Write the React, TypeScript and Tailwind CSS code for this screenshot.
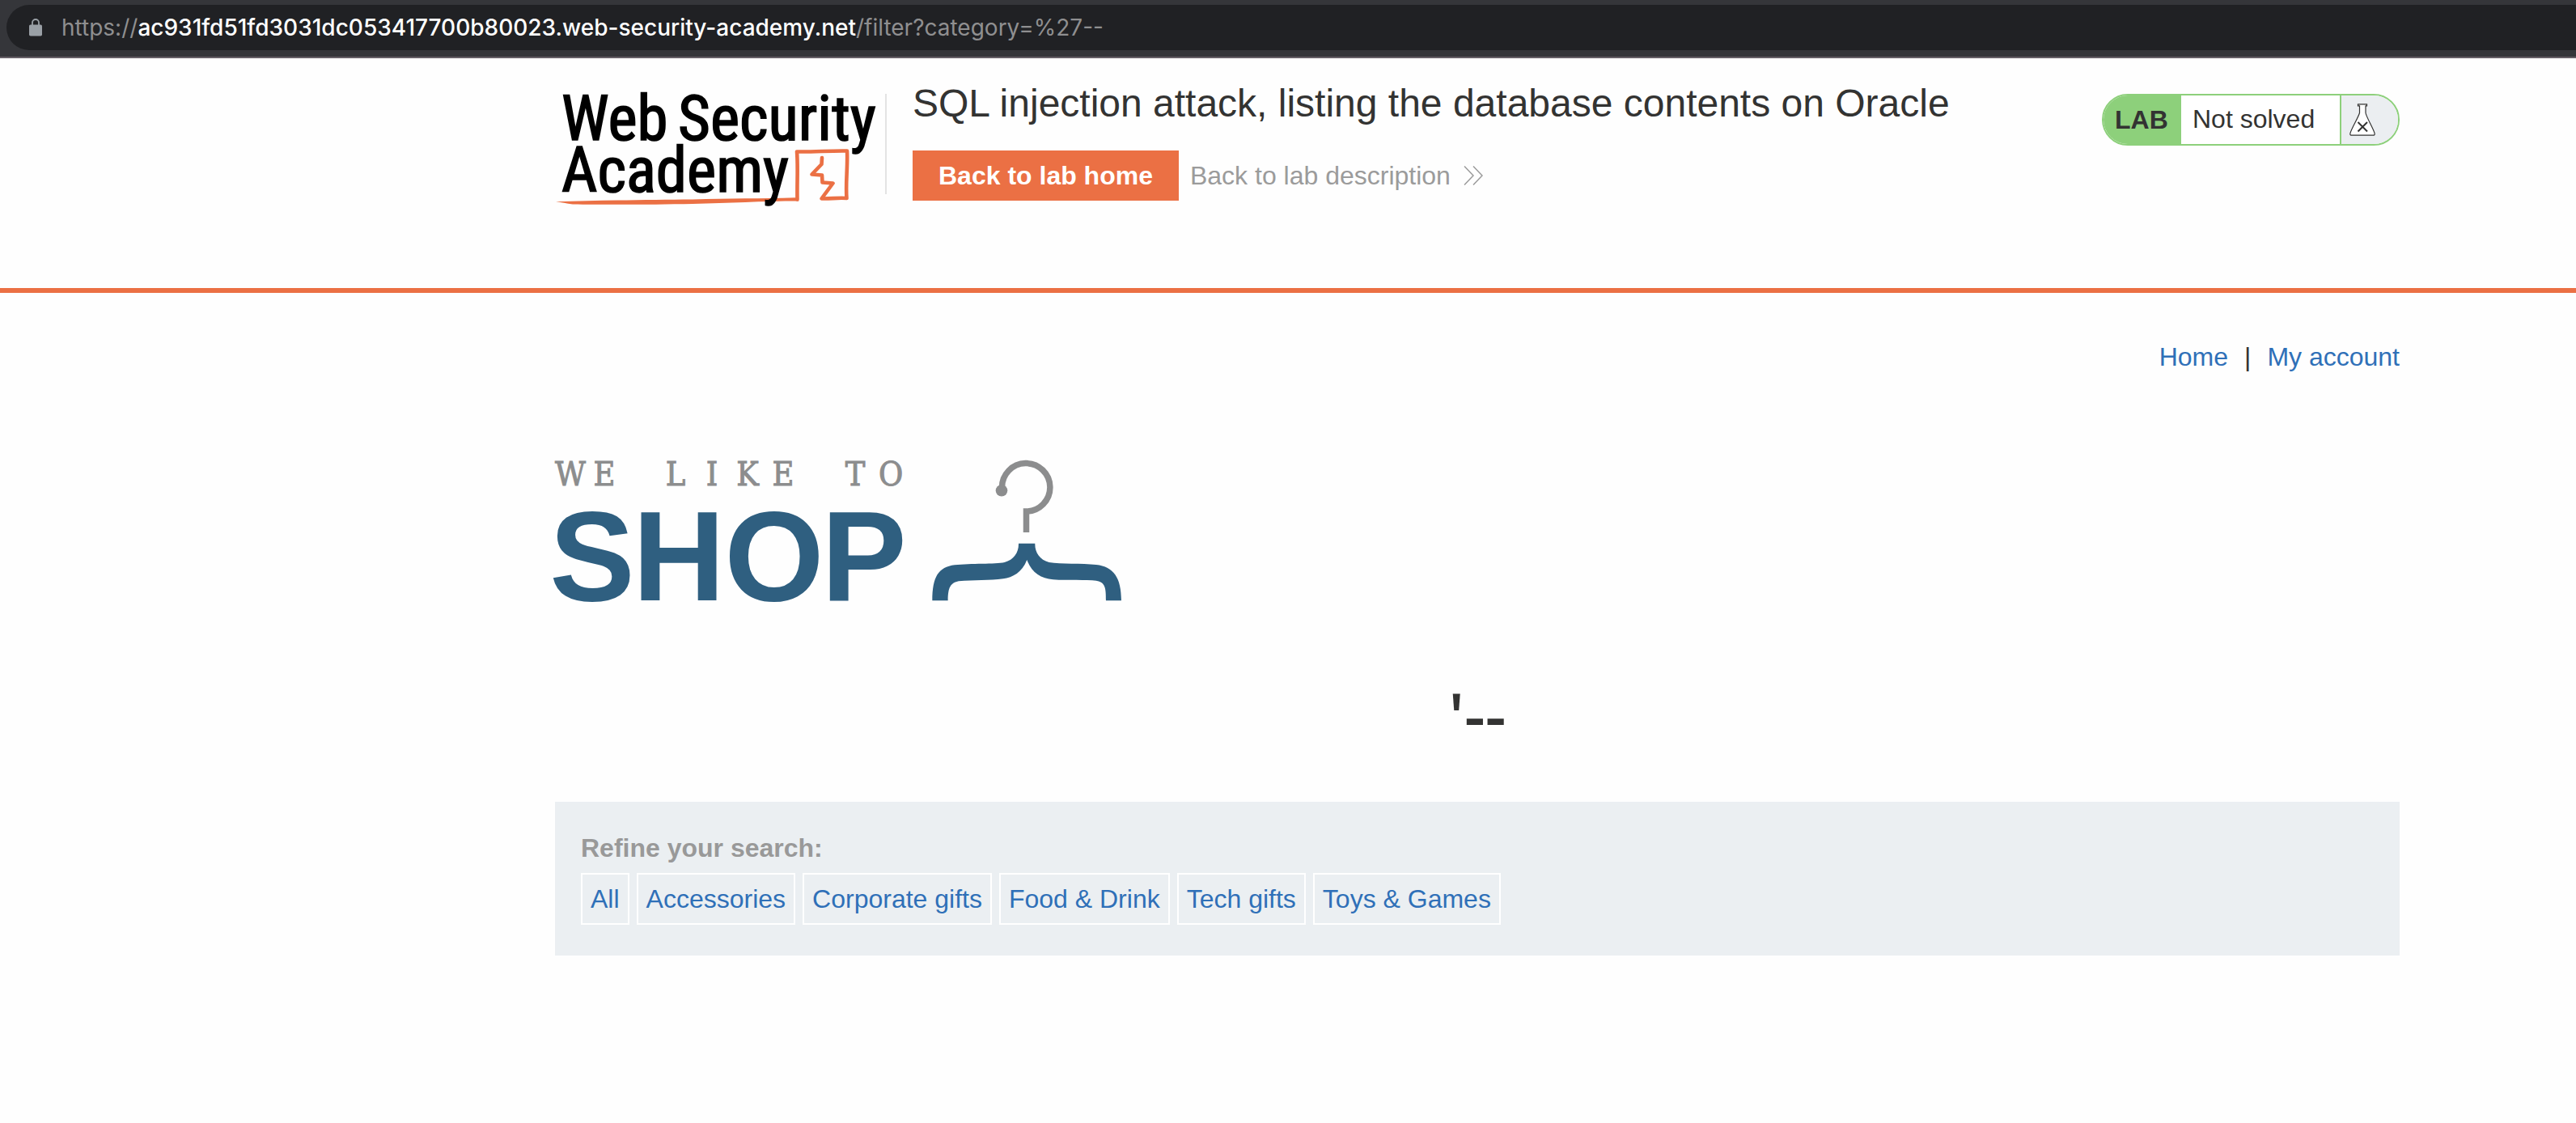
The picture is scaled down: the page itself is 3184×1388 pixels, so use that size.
const categories = ['All', 'Accessories', 'Corporate gifts', 'Food & Drink', 'Tech gifts', 'Toys & Games'];

const taglineLetters: [string, number][] = [
  ['W', 19], ['E', 61], ['L', 149], ['I', 194], ['K', 238], ['E', 282], ['T', 371], ['O', 415],
];

const shopLetters: [string, number][] = [['S', 46], ['H', 153], ['O', 271], ['P', 382]];

function AddressBar() {
  return (
    <div className="h-[72px] border-b-2 border-[#655f66] bg-[#35363a] pt-1.5 pl-2">
      <div className="flex h-14 items-center rounded-l-full bg-[#202124] pl-7">
        <svg className="h-[22px] w-4 shrink-0" viewBox="0 0 16 22" aria-hidden="true">
          <path d="M4 8V5a4 4 0 0 1 8 0V8" fill="none" stroke="#9aa0a6" strokeWidth="1.8" />
          <rect x="0" y="7.5" width="16" height="14" rx="1.8" fill="#9aa0a6" />
        </svg>
        <p className="ml-6 font-['Inter',sans-serif] text-[28px] leading-10 whitespace-nowrap text-[#8f8f90]">
          https://<span className="font-medium text-white">ac931fd51fd3031dc053417700b80023.web-security-academy.net</span>/filter?category=%27--
        </p>
      </div>
    </div>
  );
}

function AcademyLogo() {
  return (
    <svg className="h-[140px] w-[408px] shrink-0 overflow-visible" viewBox="0 0 408 140" role="img" aria-label="Web Security Academy">
      <path
        d="M1 133.2C60 131.500 120 131 170 130.500C215 129 255 129.500 297.500 128.200L301.500 132.500C255 132.500 215 135 170 136C120 137 60 137 22 136.500C14 135.500 8 134 1 133.200Z"
        fill="#eb7044"
      />
      <path
        d="M299.500 130.500C299 110 300.500 90 299 71.500C320 72 340 70 361 70.500C362 90 359 110 360.500 129C350 128 340 130 329.500 129.500L343.500 110.500L330.500 109.500L330 100.500L317.500 99.500L329.500 87L330 79"
        fill="none"
        stroke="#eb7044"
        strokeWidth="4.6"
        strokeLinejoin="round"
        strokeLinecap="round"
      />
      <g
        fontSize="77"
        fill="#000"
        stroke="#000"
        strokeWidth="1.6"
        className="font-['Roboto_Condensed','Roboto',sans-serif]"
      >
        <text x="8" y="57">Web</text>
        <text x="152" y="57">Security</text>
        <text x="8" y="121">Academy</text>
      </g>
    </svg>
  );
}

function LabStatus() {
  return (
    <div className="flex h-16 shrink-0 overflow-hidden rounded-full border-2 border-[#8dd07b] text-[32px] leading-[60px]">
      <strong className="w-24 bg-[#8dd07b] pl-3.5">LAB</strong>
      <span className="w-[198px] border-r-2 border-[#8dd07b] bg-white pl-3.5 leading-[58px]">Not solved</span>
      <span className="w-[70px] bg-[#ebeef1] pt-2.5 pl-2.5">
        <svg className="h-10 w-8" viewBox="0 0 32 40" aria-hidden="true">
          <path
            d="M10.500 .8H21.500V2.800H20V11.500C21 17 29 30 31 36.500C31.600 38.300 30.800 39.200 29 39.200H3C1.200 39.200 .4 38.300 1 36.500C3 30 11 17 12.500 11.500V2.800H10.500Z"
            fill="#fff"
            stroke="#333332"
            strokeWidth="1.2"
          />
          <path d="M10.500 23L22 34.500M22 23L10.500 34.500" stroke="#333332" strokeWidth="2" />
        </svg>
      </span>
    </div>
  );
}

function ShopLogo() {
  return (
    <svg className="h-[184px] w-[700px] max-w-full overflow-visible" viewBox="0 0 700 184" role="img" aria-label="We like to shop">
      <g
        fontSize="41"
        fill="#8c8d8e"
        stroke="#8c8d8e"
        strokeWidth="1"
        textAnchor="middle"
        className="font-['DejaVu_Serif_Condensed','DejaVu_Serif',serif]"
      >
        {taglineLetters.map(([letter, x]) => (
          <text key={x} x={x} y="39">{letter}</text>
        ))}
      </g>
      <g fontSize="158" fontWeight="700" fill="#2f5f80" textAnchor="middle">
        {shopLetters.map(([letter, x]) => (
          <text key={x} x={x} y="181">{letter}</text>
        ))}
      </g>
      <path d="M552.500 42A29.700 29.700 0 1 1 582.500 71V97" fill="none" stroke="#8c8d8e" strokeWidth="7.500" />
      <circle cx="552" cy="45.300" r="7.300" fill="#8c8d8e" />
      <path
        transform="translate(434 -20) scale(.3333)"
        d="M97 604C97 515 120 480 180 472C240 465 330 470 365 462C400 453 418 425 417 392H478C477 425 495 453 530 462C575 470 650 465 705 471C770 478 798 520 798 604H741C741 560 740 535 705 530C670 527 600 530 545 526C500 522 465 500 448 453C430 500 395 518 360 523C310 530 250 527 195 532C165 538 155 555 155 604Z"
        fill="#2f5f80"
      />
    </svg>
  );
}

export default function App() {
  return (
    <div className="min-h-screen bg-[#fefefe] font-['Liberation_Sans',Arial,sans-serif] text-[32px] leading-10 text-[#333332]">
      <AddressBar />

      <header className="border-b-[6px] border-[#eb7044] pr-[218px] pb-[100px] pl-[686px]">
        <div className="flex h-[184px] items-start pt-7">
          <div className="mt-4 flex shrink-0 items-start">
            <AcademyLogo />
            <div className="h-[124px] w-0.5 bg-[#e3e3e3]" />
          </div>
          <div className="ml-8">
            <h2 className="text-[48px] leading-[56px] whitespace-nowrap">
              SQL injection attack, listing the database contents on Oracle
            </h2>
            <div className="mt-[30px] flex items-center gap-3.5">
              <a href="#home" className="bg-[#eb7044] px-8 py-[11px] font-bold text-white">Back to lab home</a>
              <a href="#description" className="flex items-center gap-4 text-[#9b9b9b]">
                Back to lab description
                <svg className="h-6 w-6" viewBox="0 0 24 24" aria-hidden="true">
                  <path d="M1 .5L12 12L1 23.500M12 .5L23 12L12 23.500" fill="none" stroke="#9b9b9b" strokeWidth="1.500" />
                </svg>
              </a>
            </div>
          </div>
          <div className="mt-4 ml-auto">
            <LabStatus />
          </div>
        </div>
      </header>

      <main className="pr-[218px] pl-[686px]">
        <nav className="flex justify-end gap-5 pt-[59px]">
          <a href="#home" className="text-[#2f70b8]">Home</a>
          <span>|</span>
          <a href="#account" className="text-[#2f70b8]">My account</a>
        </nav>

        <div className="pt-[100px]">
          <ShopLogo />
        </div>

        <h1 className="mt-[94px] text-center font-['Open_Sans',sans-serif] text-[80px] leading-[88px] font-semibold">'--</h1>

        <section className="mt-16 bg-[#ebeff2] px-8 pt-[37px] pb-[38px]">
          <h2 className="font-bold text-[#999]">Refine your search:</h2>
          <div className="mt-[11px] flex flex-wrap gap-[9px]">
            {categories.map((name) => (
              <a key={name} href="#filter" className="border-2 border-white px-2.5 py-2.5 text-[#2f70b8]">
                {name}
              </a>
            ))}
          </div>
        </section>
      </main>
    </div>
  );
}
